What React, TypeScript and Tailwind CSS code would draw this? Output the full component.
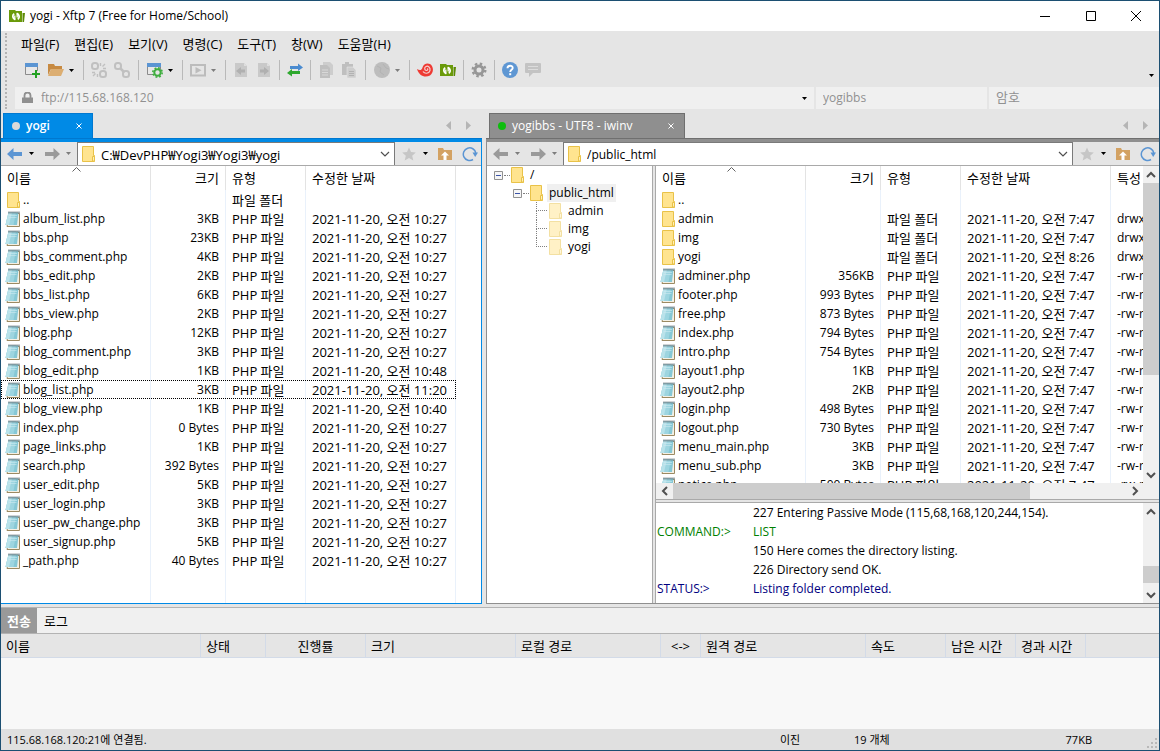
import type { ReactNode } from "react";

type FileRow = {
  name: string;
  size?: string;
  kind?: "up" | "folder" | "file";
  date?: string;
  attr?: string;
};

type TransferColumn = { label: string; width: string; align?: string };

const MENUS = ["파일(F)", "편집(E)", "보기(V)", "명령(C)", "도구(T)", "창(W)", "도움말(H)"];

const LOCAL_FILES: FileRow[] = [
  { name: "..", kind: "up" },
  { name: "album_list.php", size: "3KB", date: "10:27" },
  { name: "bbs.php", size: "23KB", date: "10:27" },
  { name: "bbs_comment.php", size: "4KB", date: "10:27" },
  { name: "bbs_edit.php", size: "2KB", date: "10:27" },
  { name: "bbs_list.php", size: "6KB", date: "10:27" },
  { name: "bbs_view.php", size: "2KB", date: "10:27" },
  { name: "blog.php", size: "12KB", date: "10:27" },
  { name: "blog_comment.php", size: "3KB", date: "10:27" },
  { name: "blog_edit.php", size: "1KB", date: "10:48" },
  { name: "blog_list.php", size: "3KB", date: "11:20" },
  { name: "blog_view.php", size: "1KB", date: "10:40" },
  { name: "index.php", size: "0 Bytes", date: "10:27" },
  { name: "page_links.php", size: "1KB", date: "10:27" },
  { name: "search.php", size: "392 Bytes", date: "10:27" },
  { name: "user_edit.php", size: "5KB", date: "10:27" },
  { name: "user_login.php", size: "3KB", date: "10:27" },
  { name: "user_pw_change.php", size: "3KB", date: "10:27" },
  { name: "user_signup.php", size: "5KB", date: "10:27" },
  { name: "_path.php", size: "40 Bytes", date: "10:27" },
];

const REMOTE_FILES: FileRow[] = [
  { name: "..", kind: "up" },
  { name: "admin", kind: "folder", date: "7:47", attr: "drwxr-xr-x" },
  { name: "img", kind: "folder", date: "7:47", attr: "drwxr-xr-x" },
  { name: "yogi", kind: "folder", date: "8:26", attr: "drwxr-xr-x" },
  { name: "adminer.php", size: "356KB", date: "7:47", attr: "-rw-r--r--" },
  { name: "footer.php", size: "993 Bytes", date: "7:47", attr: "-rw-r--r--" },
  { name: "free.php", size: "873 Bytes", date: "7:47", attr: "-rw-r--r--" },
  { name: "index.php", size: "794 Bytes", date: "7:47", attr: "-rw-r--r--" },
  { name: "intro.php", size: "754 Bytes", date: "7:47", attr: "-rw-r--r--" },
  { name: "layout1.php", size: "1KB", date: "7:47", attr: "-rw-r--r--" },
  { name: "layout2.php", size: "2KB", date: "7:47", attr: "-rw-r--r--" },
  { name: "login.php", size: "498 Bytes", date: "7:47", attr: "-rw-r--r--" },
  { name: "logout.php", size: "730 Bytes", date: "7:47", attr: "-rw-r--r--" },
  { name: "menu_main.php", size: "3KB", date: "7:47", attr: "-rw-r--r--" },
  { name: "menu_sub.php", size: "3KB", date: "7:47", attr: "-rw-r--r--" },
  { name: "notice.php", size: "500 Bytes", date: "7:47", attr: "-rw-r--r--" },
];

const LOG_LINES = [
  { tag: "", text: "227 Entering Passive Mode (115,68,168,120,244,154).", color: "text-black" },
  { tag: "COMMAND:>", text: "LIST", color: "text-[#008000]" },
  { tag: "", text: "150 Here comes the directory listing.", color: "text-black" },
  { tag: "", text: "226 Directory send OK.", color: "text-black" },
  { tag: "STATUS:>", text: "Listing folder completed.", color: "text-[#000080]" },
];

const TRANSFER_COLUMNS: TransferColumn[] = [
  { label: "이름", width: "w-[200px]" },
  { label: "상태", width: "w-[65px]" },
  { label: "진행률", width: "w-[100px]", align: "text-center" },
  { label: "크기", width: "w-[150px]" },
  { label: "로컬 경로", width: "w-[145px]" },
  { label: "<->", width: "w-[40px]", align: "text-center" },
  { label: "원격 경로", width: "w-[165px]" },
  { label: "속도", width: "w-[80px]" },
  { label: "남은 시간", width: "w-[70px]" },
  { label: "경과 시간", width: "w-[70px]" },
];

/* ---------- icons ---------- */

function Icon({ children, size = 16 }: { children: ReactNode; size?: number }) {
  return (
    <svg width={size} height={size} viewBox={`0 0 ${size} ${size}`} className="shrink-0" aria-hidden="true">
      {children}
    </svg>
  );
}

function Caret({ color = "#000" }: { color?: string }) {
  return (
    <svg width="5" height="3" viewBox="0 0 5 3" className="shrink-0" aria-hidden="true">
      <path d="M0 0h5L2.5 3z" fill={color} />
    </svg>
  );
}

function XftpIcon() {
  return (
    <Icon>
      <path d="M0 2h6l1 1h6v11H0z" fill="#6a9a0a" />
      <path d="M13.500 5H16l-1 9h-1.500z" fill="#5c8a06" />
      <path d="M6.300 11.600A3.400 3.400 0 0 1 5.200 5.600M7.700 5.400a3.400 3.400 0 0 1 1.100 6" fill="none" stroke="#fff" strokeWidth="1.800" />
      <path d="M5.800 7.500v4.200M8.200 5.300v4.200" fill="none" stroke="#fff" strokeWidth="1.300" />
    </Icon>
  );
}

function FolderIcon({ faded = false }: { faded?: boolean }) {
  return (
    <svg
      width="14"
      height="16"
      viewBox="0 0 14 16"
      className={faded ? "shrink-0 opacity-50" : "shrink-0"}
      aria-hidden="true">
      <path d="M.5.5h11v9h1v6H.5z" fill="#ffe48f" stroke="#e9c248" />
      <path d="M10.500 15V10.500h2V15z" fill="#fff0b8" stroke="#e9c248" />
    </svg>
  );
}

function NoteIcon() {
  return (
    <svg width="16" height="16" viewBox="0 0 16 16" className="shrink-0" aria-hidden="true">
      <path d="M5 2.500h9.500v13H2z" fill="#f4f0e4" stroke="#9c8a62" />
      <path d="M3.500 1.500H13.500L12 14H.5z" fill="#86c8d6" />
      <path d="M3.500 1.500H11L8.500 14H.5z" fill="#9dd5e0" />
      <path d="M3.500 1.500H7L4 14H.5z" fill="#b9e2ea" />
      <path d="M4 4.500h8M3.500 6.500h8" stroke="#cdeaf0" strokeWidth=".6" />
      <path d="M3.500 1.500H14.500" stroke="#4b5a60" strokeWidth="2" strokeDasharray="1 1" />
    </svg>
  );
}

function NewSessionIcon() {
  return (
    <Icon>
      <path d="M.5 2.500h12v10H.5z" fill="#e8e8e8" stroke="#8b8b8b" />
      <path d="M0 1h13v4H0z" fill="#5b95d3" />
      <path d="M8 9h7v6H8z" fill="#e5e5e5" />
      <path d="M11 8v8M7 12h8" stroke="#22a122" strokeWidth="2" />
    </Icon>
  );
}

function OpenFolderIcon() {
  return (
    <Icon>
      <path d="M0 2h6l1 2h7v3H3l-3 6z" fill="#c78a42" />
      <path d="M3 7h13l-3 7H0z" fill="#dcae72" />
    </Icon>
  );
}

function LinkIcon({ broken = false }: { broken?: boolean }) {
  return (
    <Icon>
      <g fill="none" stroke="#c0c0c0" strokeWidth="2">
        <rect x="1" y="1" width="6" height="6" rx="2.500" />
        <rect x="9" y="9" width="6" height="6" rx="2.500" />
        {broken ? (
          <path d="M9.500 1v3M14 2l-2.500 2.500M12 6.500h3M1 10.500h3M4.500 11.500L2 14M6.500 12v3" strokeWidth="1.400" />
        ) : (
          <path d="M6 6l4.500 4.500" strokeWidth="2.500" />
        )}
      </g>
    </Icon>
  );
}

function WindowGearIcon() {
  return (
    <Icon>
      <path d="M.5 2.500h13v10h-13z" fill="#e8e8e8" stroke="#8b8b8b" />
      <path d="M0 1h14v4H0z" fill="#5b95d3" />
      <circle cx="10.500" cy="10.500" r="3.200" fill="#e5e5e5" stroke="#3fae3f" strokeWidth="2" />
      <circle cx="10.500" cy="10.500" r="4.700" fill="none" stroke="#3fae3f" strokeWidth="1.600" strokeDasharray="1.850 1.850" />
    </Icon>
  );
}

function PlayIcon() {
  return (
    <Icon>
      <path d="M1 3h14v10.500H1z" fill="none" stroke="#bcbcbc" strokeWidth="2" />
      <path d="M5.500 5v6.500l6-3.200z" fill="#bcbcbc" />
    </Icon>
  );
}

function DocArrowIcon({ right = false }: { right?: boolean }) {
  return (
    <Icon>
      <path d="M2 1h9l3 3v11H2z" fill="#c9c9c9" />
      <path d="M11 1v3h3" fill="#dedede" />
      {right ? (
        <path d="M4 7.500h4V5l5 4-5 4v-2.500H4z" fill="#b0b0b0" />
      ) : (
        <path d="M12 7.500H8V5L3 9l5 4v-2.500h4z" fill="#b0b0b0" />
      )}
    </Icon>
  );
}

function SyncIcon() {
  return (
    <Icon>
      <path d="M3 4h8V1.500L16 5.500 11 9V7H3z" fill="#4a8bd0" />
      <path d="M13 9H5V7L0 11l5 3.500V12h8z" fill="#2ea82e" />
    </Icon>
  );
}

function CopyIcon() {
  return (
    <Icon>
      <path d="M5 0h7l3 3v10H5z" fill="#cdcdcd" />
      <path d="M2 3h7l3 3v10H2z" fill="#bfbfbf" />
      <path d="M4 8h6M4 10.500h6M4 13h6" stroke="#d8d8d8" />
    </Icon>
  );
}

function PasteIcon() {
  return (
    <Icon>
      <path d="M1 2h3V0h4v2h4v11H1z" fill="#bfbfbf" />
      <path d="M6 5h6l3 3v8H6z" fill="#cdcdcd" stroke="#e5e5e5" strokeWidth=".6" />
      <path d="M8 9.500h5M8 11.500h5M8 13.500h5" stroke="#b2b2b2" />
    </Icon>
  );
}

function GlobeIcon() {
  return (
    <Icon>
      <circle cx="8" cy="8" r="8" fill="#bdbdbd" />
      <path d="M3 4l4 2-1 4 4 3M9 2l3 4 3 1" fill="none" stroke="#b3b3b3" />
    </Icon>
  );
}

function ShellIcon() {
  return (
    <Icon>
      <path
        d="M0 7c3 2 5 1 5.500-1.500C6.500 2 10 .5 13 2c4 2.500 3.800 8.500 0 11.500C8 16 2 14 0 7z"
        fill="#ee3a33"
      />
      <path
        d="M6 9.500c1.500 2.500 6 2.500 7-1 .6-3-2-5-4-4-2 1-1.600 4 .4 4 1.500 0 1.800-1.600.8-2"
        fill="none"
        stroke="#f5d0ce"
        strokeWidth="1.200"
      />
    </Icon>
  );
}

function GearIcon() {
  return (
    <Icon>
      <circle cx="8" cy="8" r="4" fill="none" stroke="#979797" strokeWidth="3" />
      <circle cx="8" cy="8" r="6.300" fill="none" stroke="#979797" strokeWidth="2.400" strokeDasharray="2.474 2.474" />
    </Icon>
  );
}

function HelpIcon() {
  return (
    <Icon>
      <circle cx="8" cy="8" r="8" fill="#5f97d3" />
      <path d="M5.500 6.200c0-3.200 5.200-3.200 5.200-.3C10.700 7.800 8.200 7.800 8.200 10" fill="none" stroke="#fff" strokeWidth="1.900" />
      <path d="M7.200 11.200h2v2h-2z" fill="#fff" />
    </Icon>
  );
}

function ChatIcon() {
  return (
    <Icon>
      <path d="M1 1h14a1 1 0 0 1 1 1v8a1 1 0 0 1-1 1H8l-4 4v-4H1a1 1 0 0 1-1-1V2a1 1 0 0 1 1-1z" fill="#c3c3c3" />
      <path d="M3 4.500h10M3 7.500h10" stroke="#dcdcdc" />
    </Icon>
  );
}

function ArrowIcon({ right = false, color }: { right?: boolean; color: string }) {
  return (
    <svg width="16" height="12" viewBox="0 0 16 12" className="shrink-0" aria-hidden="true">
      <path
        d={right ? "M16 6L9.500 0v4H1v4h8.500v4z" : "M0 6l6.500-6v4H15v4H6.500v4z"}
        fill={color}
      />
    </svg>
  );
}

function StarIcon() {
  return (
    <Icon size={14}>
      <path d="M7 .5l2 4.600 4.800.4-3.600 3.300 1.100 4.800L7 11.100l-4.300 2.500 1.100-4.800L.2 5.500 5 5.100z" fill="#c6c6c6" />
    </Icon>
  );
}

function HomeFolderIcon() {
  return (
    <Icon size={14}>
      <path d="M0 1h5l1 2h8v10H0z" fill="#d3a263" />
      <path d="M7 4.500l4 4H8.500V13h-3V8.500H3z" fill="#fff" />
    </Icon>
  );
}

function RefreshIcon() {
  return (
    <Icon>
      <path d="M11 13.500A6.300 6.300 0 1 1 13.800 7" fill="none" stroke="#5b95d3" strokeWidth="1.500" />
      <path d="M10.500 6.500h5.500L13.200 11z" fill="#5b95d3" />
    </Icon>
  );
}

function Chevron({ dir, color = "#505050" }: { dir: "up" | "down" | "left" | "right"; color?: string }) {
  const paths = {
    up: "M1 7l4-4 4 4",
    down: "M1 3l4 4 4-4",
    left: "M7 1L3 5l4 4",
    right: "M3 1l4 4-4 4",
  };
  return (
    <Icon size={10}>
      <path d={paths[dir]} fill="none" stroke={color} strokeWidth="2" />
    </Icon>
  );
}

/* ---------- chrome ---------- */

function TitleBar() {
  return (
    <header className="flex h-[30px] shrink-0 items-center bg-white pl-2">
      <XftpIcon />
      <h1 className="ml-[5px] flex-1 text-[12px]">yogi - Xftp 7 (Free for Home/School)</h1>
      <button aria-label="Minimize" className="flex h-full w-[46px] items-center justify-center">
        <Icon size={10}><path d="M0 5.500h10" stroke="#000" /></Icon>
      </button>
      <button aria-label="Maximize" className="flex h-full w-[45px] items-center justify-center">
        <Icon size={10}><path d="M.5.5h9v9h-9z" fill="none" stroke="#000" /></Icon>
      </button>
      <button aria-label="Close" className="flex h-full w-[46px] items-center justify-center">
        <Icon size={10}><path d="M0 0l10 10M10 0L0 10" stroke="#000" /></Icon>
      </button>
    </header>
  );
}

function ToolButton({ label, children }: { label: string; children: ReactNode }) {
  return (
    <button aria-label={label} className="flex h-6 w-[23px] items-center justify-center">
      {children}
    </button>
  );
}

function DropButton({ label, color }: { label: string; color?: string }) {
  return (
    <button aria-label={label} className="flex h-6 w-3 items-center pl-0.5">
      <Caret color={color} />
    </button>
  );
}

function Separator({ wide = false }: { wide?: boolean }) {
  return (
    <span className={`flex justify-center ${wide ? "w-2.5" : "w-2"}`}>
      <span className="h-5 w-px bg-[#b9b9b9]" />
    </span>
  );
}

function Toolbar() {
  return (
    <div className="mb-1 flex h-[26px] items-center pl-2.5">
      <ToolButton label="New session"><NewSessionIcon /></ToolButton>
      <ToolButton label="Open session"><OpenFolderIcon /></ToolButton>
      <DropButton label="Open session list" />
      <Separator />
      <ToolButton label="Disconnect"><LinkIcon broken /></ToolButton>
      <ToolButton label="Reconnect"><LinkIcon /></ToolButton>
      <Separator wide />
      <ToolButton label="Session properties"><WindowGearIcon /></ToolButton>
      <DropButton label="Session properties list" />
      <Separator />
      <ToolButton label="Run"><PlayIcon /></ToolButton>
      <DropButton label="Run list" color="#7d7d7d" />
      <Separator />
      <ToolButton label="Transfer left"><DocArrowIcon /></ToolButton>
      <ToolButton label="Transfer right"><DocArrowIcon right /></ToolButton>
      <Separator />
      <ToolButton label="Synchronize"><SyncIcon /></ToolButton>
      <Separator />
      <ToolButton label="Copy"><CopyIcon /></ToolButton>
      <ToolButton label="Paste"><PasteIcon /></ToolButton>
      <Separator wide />
      <ToolButton label="Encoding"><GlobeIcon /></ToolButton>
      <DropButton label="Encoding list" color="#7d7d7d" />
      <Separator />
      <ToolButton label="Xshell"><ShellIcon /></ToolButton>
      <ToolButton label="Xftp"><XftpIcon /></ToolButton>
      <Separator />
      <ToolButton label="Options"><GearIcon /></ToolButton>
      <Separator />
      <ToolButton label="Help"><HelpIcon /></ToolButton>
      <ToolButton label="Feedback"><ChatIcon /></ToolButton>
      <button aria-label="More" className="mr-0.5 ml-auto flex h-4 w-3 items-center justify-center self-end">
        <Caret />
      </button>
    </div>
  );
}

function AddressBar() {
  const field = "h-[22px] min-w-0 bg-[#f0f0f0] pb-0.5 pl-[7px] text-[#919191] placeholder:text-[#919191] outline-none";
  return (
    <div className="flex gap-0.5 pl-1">
      <div className="flex h-[22px] flex-[785_1_0%] items-center bg-[#f0f0f0] px-[7px]">
        <svg width="11" height="12" viewBox="0 0 11 12" aria-hidden="true">
          <path d="M2.500 6V3.500a3 3 0 0 1 6 0V6" fill="none" stroke="#909090" strokeWidth="1.800" />
          <path d="M0 5.500h11V11H0z" fill="#909090" />
        </svg>
        <input
          aria-label="Host address"
          defaultValue="ftp://115.68.168.120"
          className="ml-2 min-w-0 flex-1 bg-transparent text-[#919191] outline-none"
        />
        <button aria-label="Address history" className="flex h-full items-center"><Caret /></button>
      </div>
      <input aria-label="User name" defaultValue="yogibbs" className={`${field} flex-[164_1_0%]`} />
      <input aria-label="Password" type="password" placeholder="암호" className={`${field} flex-[163_1_0%] text-[13px]`} />
    </div>
  );
}

/* ---------- panes ---------- */

function PaneTabs({ title, active }: { title: string; active: boolean }) {
  return (
    <div className={`flex h-[30px] shrink-0 items-end border-b ${active ? "border-[#0078d0]" : "border-[#6f6f6f]"}`}>
      <div
        className={`flex h-[25px] items-center border border-b-0 pl-2 text-white ${
          active
            ? "ml-0.5 w-[90px] border-[#0078d0] bg-[#008ae6]"
            : "ml-[3px] w-[196px] border-[#6f6f6f] bg-[#8f8f8f]"
        }`}>
        <span className={`mr-1.5 size-2 rounded-full ${active ? "bg-[#d9d9d9]" : "bg-[#0dbd0d]"}`} />
        <span className={`flex-1 ${active ? "font-semibold" : ""}`}>{title}</span>
        <button aria-label="Close tab" className="mr-2.5">
          <Icon size={6}><path d="M.5.5l5 5M5.500.5l-5 5" stroke="#fff" /></Icon>
        </button>
      </div>
      <div className="mr-2 mb-2 ml-auto flex gap-2.5">
        <button aria-label="Previous tab"><Icon size={9}><path d="M5 0v9L0 4.500z" fill="#b5b5b5" /></Icon></button>
        <button aria-label="Next tab"><Icon size={9}><path d="M1 0v9l5-4.500z" fill="#b5b5b5" /></Icon></button>
      </div>
    </div>
  );
}

function PathBar({ path, label, active = false }: { path: string; label: string; active?: boolean }) {
  return (
    <div className="flex h-6 shrink-0 items-center border-b border-[#a9a9a9]">
      <button aria-label="Back" className="ml-1.5"><ArrowIcon color={active ? "#5b95d3" : "#9a9a9a"} /></button>
      <button aria-label="Back history" className="ml-1.5"><Caret color={active ? "#000" : "#7d7d7d"} /></button>
      <button aria-label="Forward" className="ml-2.5"><ArrowIcon right color="#9a9a9a" /></button>
      <button aria-label="Forward history" className="ml-1.5"><Caret color="#7d7d7d" /></button>
      <div className="ml-1.5 flex min-w-0 flex-1 items-center self-stretch border border-b-0 border-[#7a7a7a] bg-white pr-1 pl-1">
        <FolderIcon />
        <input
          aria-label={label}
          defaultValue={path}
          className={`ml-[5px] min-w-0 flex-1 bg-transparent pt-0.5 outline-none ${active ? "text-[13px]" : ""}`}
        />
        <button aria-label="Path list">
          <Icon size={10}><path d="M1 3l4 4 4-4" fill="none" stroke="#505050" strokeWidth="1.200" /></Icon>
        </button>
      </div>
      <button aria-label="Bookmark" className="ml-[7px]"><StarIcon /></button>
      <button aria-label="Bookmark list" className="ml-[7px]"><Caret /></button>
      <button aria-label="Up one folder" className="ml-2.5"><HomeFolderIcon /></button>
      <button aria-label="Refresh" className="mr-[3px] ml-2.5"><RefreshIcon /></button>
    </div>
  );
}

function FileTable({ files, focused, withAttr = false }: { files: FileRow[]; focused?: string; withAttr?: boolean }) {
  const head = "h-6 border-r border-[#e3e3e3] p-0 pl-1.5 text-left text-[13px] font-normal";
  const cell = "h-[19px] border-r border-[#e9f1fb] p-0 pl-1.5 text-[13px]";
  return (
    <table className={`h-full table-fixed border-separate border-spacing-0 whitespace-nowrap ${withAttr ? "w-[605px]" : "w-[455px]"}`}>
      <colgroup>
        <col className="w-[150px]" />
        <col className="w-[75px]" />
        <col className="w-[80px]" />
        <col className="w-[150px]" />
        {withAttr && <col className="w-[150px]" />}
      </colgroup>
      <thead>
        <tr>
          <th className={`${head} relative`}>
            이름
            <span className="absolute top-0 left-[71px]">
              <svg width="9" height="6" viewBox="0 0 9 6" aria-hidden="true">
                <path d="M.5 5.500l4-4 4 4" fill="none" stroke="#606060" />
              </svg>
            </span>
          </th>
          <th className="h-6 border-r border-[#e3e3e3] p-0 pr-1.5 text-right text-[13px] font-normal">크기</th>
          <th className={head}>유형</th>
          <th className={head}>수정한 날짜</th>
          {withAttr && <th className={head}>특성</th>}
        </tr>
      </thead>
      <tbody>
        {files.map(({ name, size, kind = "file", date, attr }) => (
          <tr
            key={name}
            className={focused === name ? "outline-1 -outline-offset-1 outline-black outline-dotted" : undefined}>
            <td className="h-[19px] border-r border-[#e9f1fb] p-0 pl-1">
              <span className="flex items-center">
                <span className={`flex w-[18px] shrink-0 ${kind === "file" ? "" : "pl-0.5"}`}>
                  {kind === "file" ? <NoteIcon /> : <FolderIcon />}
                </span>
                {name}
              </span>
            </td>
            <td className="h-[19px] border-r border-[#e9f1fb] p-0 pr-1.5 text-right">{size}</td>
            <td className={cell}>
              {kind === "file" ? "PHP 파일" : kind === "folder" || !withAttr ? "파일 폴더" : ""}
            </td>
            <td className={cell}>{date && `2021-11-20, 오전 ${date}`}</td>
            {withAttr && <td className="h-[19px] p-0 pl-1.5">{attr}</td>}
          </tr>
        ))}
        <tr aria-hidden="true">
          <td className="border-r border-[#e9f1fb] p-0" />
          <td className="border-r border-[#e9f1fb] p-0" />
          <td className="border-r border-[#e9f1fb] p-0" />
          <td className="border-r border-[#e9f1fb] p-0" />
          {withAttr && <td className="p-0" />}
        </tr>
      </tbody>
    </table>
  );
}

function Expander() {
  return (
    <button aria-label="Collapse folder" className="mr-px">
      <Icon size={9}>
        <path d="M.5.5h8v8h-8z" fill="#f6f6f6" stroke="#919191" />
        <path d="M2 4.500h5" stroke="#3b54a8" />
      </Icon>
    </button>
  );
}

function FolderTree() {
  const leaves = ["admin", "img", "yogi"];
  return (
    <ul className="flex-[158_1_0%] overflow-hidden bg-white pl-[7px] leading-[18px]">
      <li>
        <div className="flex h-[18px] items-center">
          <Expander />
          <span className="mr-px w-1.5 border-b border-dotted border-[#808080]" />
          <FolderIcon />
          <span className="ml-[5px]">/</span>
        </div>
        <ul className="pl-[19px]">
          <li>
            <div className="flex h-[18px] items-center">
              <Expander />
              <span className="mr-px w-1.5 border-b border-dotted border-[#808080]" />
              <FolderIcon />
              <span className="ml-[3px] bg-[#f0f0f0] px-0.5">public_html</span>
            </div>
            <ul className="pl-[23px]">
              {leaves.map((leaf, i) => (
                <li key={leaf} className="flex h-[18px] items-center">
                  <span className="mr-0.5 flex h-full w-[11px] flex-col">
                    <span className="h-[9px] border-b border-l border-dotted border-[#808080]" />
                    {i < leaves.length - 1 && <span className="h-[9px] border-l border-dotted border-[#808080]" />}
                  </span>
                  <FolderIcon faded />
                  <span className="ml-[5px]">{leaf}</span>
                </li>
              ))}
            </ul>
          </li>
        </ul>
      </li>
    </ul>
  );
}

function ListScroll() {
  return (
    <div className="flex w-4 shrink-0 flex-col items-center bg-[#f0f0f0]">
      <button aria-label="Scroll list up" className="flex h-[17px] items-center"><Chevron dir="up" /></button>
      <span className="w-full flex-[192_1_0%] bg-[#cdcdcd]" />
      <span className="flex-[91_1_0%]" />
      <button aria-label="Scroll list down" className="flex h-[17px] items-center"><Chevron dir="down" /></button>
      <span className="h-4" />
    </div>
  );
}

function LogPanel() {
  return (
    <div className="flex h-[100px] shrink-0 bg-white">
      <dl className="min-w-0 flex-1 overflow-hidden leading-[19px]">
        {LOG_LINES.map(({ tag, text, color }) => (
          <div key={text} className={`flex h-[19px] ${color}`}>
            <dt className="w-24 shrink-0 pl-px">{tag}</dt>
            <dd className="pl-px">{text}</dd>
          </div>
        ))}
      </dl>
      <div className="flex w-4 flex-col items-center bg-[#f0f0f0]">
        <button aria-label="Scroll log up" className="flex h-[17px] items-center"><Chevron dir="up" /></button>
        <span className="flex-[47_1_0%]" />
        <span className="h-[17px] w-full bg-[#cdcdcd]" />
        <span className="flex-[3_1_0%]" />
        <button aria-label="Scroll log down" className="flex h-[17px] items-center"><Chevron dir="down" /></button>
      </div>
    </div>
  );
}

function LocalPane() {
  return (
    <section className="flex min-w-0 flex-[481_1_0%] flex-col">
      <PaneTabs title="yogi" active />
      <div className="flex min-h-0 flex-1 flex-col border-t-[3px] border-r border-b border-[#008ae6]">
        <PathBar path="C:₩DevPHP₩Yogi3₩Yogi3₩yogi" label="Local path" active />
        <div className="min-h-0 flex-1 overflow-hidden bg-white">
          <FileTable files={LOCAL_FILES} focused="blog_list.php" />
        </div>
      </div>
    </section>
  );
}

function RemotePane() {
  return (
    <section className="flex min-w-0 flex-[673_1_0%] flex-col">
      <PaneTabs title="yogibbs - UTF8 - iwinv" active={false} />
      <div className="flex min-h-0 flex-1 flex-col border-t-[3px] border-b border-l border-[#8f8f8f]">
        <PathBar path="/public_html" label="Remote path" />
        <div className="flex min-h-0 flex-1">
          <FolderTree />
          <div className="w-1 shrink-0 border-x border-[#a9a9a9] bg-[#e5e5e5]" />
          <div className="flex min-w-0 flex-[503_1_0%] flex-col">
            <div className="flex min-h-0 flex-1">
              <div className="flex min-w-0 flex-1 flex-col bg-white">
                <div className="min-h-0 flex-1 overflow-hidden">
                  <FileTable files={REMOTE_FILES} withAttr />
                </div>
                <div className="flex h-4 shrink-0 items-center bg-[#f0f0f0]">
                  <button aria-label="Scroll list left" className="flex w-[17px] justify-center"><Chevron dir="left" /></button>
                  <span className="h-full flex-[357_1_0%] bg-[#cdcdcd]" />
                  <span className="flex-[96_1_0%]" />
                  <button aria-label="Scroll list right" className="flex w-[17px] justify-center"><Chevron dir="right" /></button>
                </div>
              </div>
              <ListScroll />
            </div>
            <div className="h-1 shrink-0 border-y border-[#a9a9a9] bg-[#e5e5e5]" />
            <LogPanel />
          </div>
        </div>
      </div>
    </section>
  );
}

function TransferPanel() {
  return (
    <section className="mt-[3px] h-[122px] shrink-0 border-t border-[#b3b3b3] bg-[#f8f8f8] text-[13px]">
      <div className="flex h-[26px] border-b border-[#b3b3b3] bg-[#f0f0f0]">
        <button className="w-9 bg-[#999999] font-semibold text-white">전송</button>
        <button className="px-[7px]">로그</button>
      </div>
      <div className="border-b border-[#d3dbe8] bg-[#e5e5e5]">
        <table className="w-[1085px] table-fixed border-separate border-spacing-0">
          <thead>
            <tr>
              {TRANSFER_COLUMNS.map(({ label, width, align = "pl-[5px] text-left" }) => (
                <th
                  key={label}
                  className={`h-[23px] border-r border-[#d3dbe8] py-0 pr-0 font-normal whitespace-nowrap ${width} ${align}`}>
                  {label}
                </th>
              ))}
            </tr>
          </thead>
        </table>
      </div>
    </section>
  );
}

function StatusBar() {
  return (
    <footer className="flex h-[21px] shrink-0 items-center bg-[#e0e0e0] pl-1.5 text-[11px]">
      <span className="min-w-0 flex-1">115.68.168.120:21에 연결됨.</span>
      <span className="w-[74px]">이진</span>
      <span className="w-[120px]">19 개체</span>
      <span className="w-[118px] text-right">77KB</span>
      <span className="flex w-[67px] justify-end self-end pr-0.5 pb-0.5">
        <Icon size={10}>
          <path d="M8 0h2v2H8zM8 4h2v2H8zM8 8h2v2H8zM4 4h2v2H4zM4 8h2v2H4zM0 8h2v2H0z" fill="#b9b9b9" />
        </Icon>
      </span>
    </footer>
  );
}

export default function App() {
  return (
    <main className="flex h-screen min-h-[700px] flex-col overflow-hidden border border-[#1c4f72] bg-[#e5e5e5] font-['Open_Sans','Noto_Sans_CJK_KR',sans-serif] text-[12px] leading-[18px] text-black">
      <TitleBar />
      <div className="flex h-[78px] shrink-0 pt-0.5 pl-1">
        <div className="w-1.5 border-l-2 border-dotted border-[#b3b3b3]" />
        <div className="flex min-w-0 flex-1 flex-col">
          <nav className="flex h-6 items-center gap-[15px] pb-0.5 pl-2.5 text-[13px]">
            {MENUS.map((menu) => (
              <button key={menu}>{menu}</button>
            ))}
          </nav>
          <Toolbar />
          <AddressBar />
        </div>
      </div>
      <div className="flex min-h-0 flex-1 gap-1">
        <LocalPane />
        <RemotePane />
      </div>
      <TransferPanel />
      <StatusBar />
    </main>
  );
}
